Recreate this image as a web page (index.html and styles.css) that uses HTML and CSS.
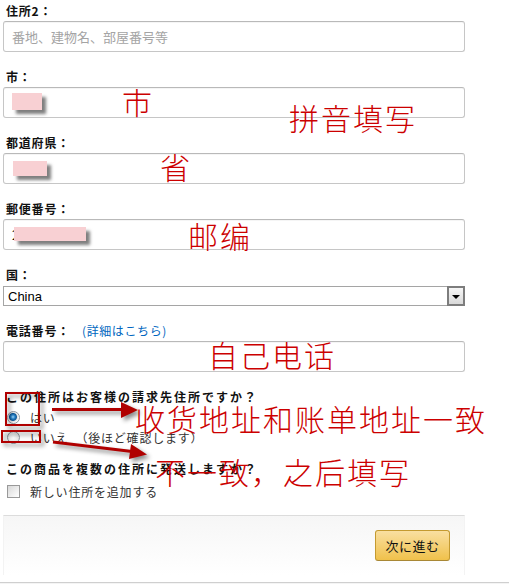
FILE: index.html
```html
<!DOCTYPE html>
<html lang="ja">
<head>
  <meta charset="UTF-8">
  <meta name="viewport" content="width=device-width, initial-scale=1.0">
  <title>お届け先住所</title>
  <link rel="stylesheet" href="styles.css">
</head>
<body>
  <div class="page">
    <form class="address-form" action="">
      <div class="field">
        <label class="field-label" for="address2">住所2：</label>
        <input class="text-input" type="text" id="address2" placeholder="番地、建物名、部屋番号等">
      </div>

      <div class="field">
        <label class="field-label" for="city">市：</label>
        <div class="input-wrap">
          <input class="text-input" type="text" id="city">
          <span class="redact redact-city"></span>
        </div>
      </div>

      <div class="field">
        <label class="field-label" for="state">都道府県：</label>
        <div class="input-wrap">
          <input class="text-input" type="text" id="state">
          <span class="redact redact-state"></span>
        </div>
      </div>

      <div class="field">
        <label class="field-label" for="zip">郵便番号：</label>
        <div class="input-wrap">
          <input class="text-input" type="text" id="zip" value="2">
          <span class="redact redact-zip"></span>
        </div>
      </div>

      <div class="field">
        <label class="field-label select-label" for="country">国：</label>
        <div class="select-wrap">
          <select class="select-input" id="country">
            <option>China</option>
          </select>
          <span class="select-arrow"></span>
        </div>
      </div>

      <div class="field">
        <label class="field-label" for="phone">電話番号：<a class="help-link" href="#">(詳細はこちら)</a></label>
        <input class="text-input" type="text" id="phone">
      </div>

      <div class="question">この住所はお客様の請求先住所ですか？</div>
      <label class="choice"><input class="radio" type="radio" name="billing" checked>はい</label>
      <label class="choice"><input class="radio" type="radio" name="billing">いいえ &nbsp;（後ほど確認します）</label>

      <div class="question question-second">この商品を複数の住所に発送しますか？</div>
      <label class="choice"><input class="checkbox" type="checkbox">新しい住所を追加する</label>

      <div class="form-footer">
        <button class="next-button" type="submit">次に進む</button>
      </div>
    </form>
    <div class="page-bottom"></div>

    <!-- hand-drawn notes on top of the screenshot -->
    <svg class="marks" width="509" height="584" viewBox="0 0 509 584">
      <g class="marks-shadow" fill="none" stroke="#b00000" stroke-width="2">
        <rect x="6" y="393" width="33" height="32"></rect>
        <rect x="2" y="431" width="38" height="11"></rect>
        <line x1="52" y1="409.5" x2="123" y2="409.5" stroke-width="3"></line>
        <polygon points="121,402 138,410 121,418" fill="#b00000" stroke="none"></polygon>
        <line x1="53" y1="442" x2="132" y2="451.5" stroke-width="3"></line>
        <polygon points="131,444 147,454.5 129,459" fill="#b00000" stroke="none"></polygon>
      </g>
    </svg>
    <div class="notes">
      <span class="note note-city">市</span>
      <span class="note note-pinyin">拼音填写</span>
      <span class="note note-state">省</span>
      <span class="note note-zip">邮编</span>
      <span class="note note-phone">自己电话</span>
      <span class="note note-same">收货地址和账单地址一致</span>
      <span class="note note-diff">不一致，之后填写</span>
    </div>
  </div>
</body>
</html>
```

FILE: styles.css
```css
body {
  margin: 0;
  padding: 0;
  background-color: #ffffff;
  font-family: "Noto Sans CJK JP", "Liberation Sans", sans-serif;
  color: #222;
}

.page {
  position: relative;
  width: 509px;
  height: 584px;
  overflow: hidden;
}

.address-form {
  width: 462px;
  padding: 3px 0 0 3px;
}

.field {
  margin-bottom: 17px;
}

.field-label {
  display: block;
  height: 16px;
  line-height: 16px;
  margin-bottom: 2px;
  padding-left: 3px;
  font-size: 12px;
  font-weight: bold;
  letter-spacing: 0.8px;
  color: #111;
}

.select-label {
  margin-bottom: 3px;
}

.help-link {
  margin-left: 12px;
  font-weight: normal;
  letter-spacing: 0.6px;
  color: #0066c0;
  text-decoration: none;
}

.input-wrap {
  position: relative;
}

.text-input {
  display: block;
  width: 100%;
  height: 31px;
  box-sizing: border-box;
  padding: 0 8px;
  border: 1px solid #c6c6c6;
  border-top-color: #b9b9b9;
  border-radius: 3px;
  box-shadow: inset 0 1px 0 rgba(0, 0, 0, 0.04);
  font-family: "Noto Sans CJK JP", sans-serif;
  font-size: 13px;
  color: #111;
  background-color: #fff;
}

.text-input::placeholder {
  color: #a4a4a4;
}

/* pink blocks that hide the private values */
.redact {
  position: absolute;
  background-color: #f8d0d3;
  box-shadow: 4px 4px 3px rgba(0, 0, 0, 0.5);
}

.redact-city {
  top: 6px;
  left: 9px;
  width: 30px;
  height: 17px;
}

.redact-state {
  top: 8px;
  left: 10px;
  width: 34px;
  height: 15px;
}

.redact-zip {
  top: 8px;
  left: 11px;
  width: 72px;
  height: 14px;
}

.select-wrap {
  position: relative;
  height: 20px;
}

.select-input {
  display: block;
  width: 100%;
  height: 20px;
  margin: 0;
  padding: 0 0 0 4px;
  border: 1px solid #a5a5a5;
  border-radius: 0;
  appearance: none;
  -webkit-appearance: none;
  background-color: #fff;
  font-family: "Liberation Sans", Arial, sans-serif;
  font-size: 13px;
  color: #000;
}

.select-arrow {
  position: absolute;
  top: 0;
  right: 0;
  width: 18px;
  height: 20px;
  box-sizing: border-box;
  border: 2px solid #7d7d7d;
  background: linear-gradient(#f6f6f6, #d9d9d9);
}

.select-arrow::after {
  content: "";
  position: absolute;
  top: 7px;
  left: 3px;
  border-left: 4px solid transparent;
  border-right: 4px solid transparent;
  border-top: 4px solid #000;
}

.question {
  height: 16px;
  line-height: 16px;
  margin-top: 15px;
  margin-bottom: 2px;
  padding-left: 3px;
  font-size: 12px;
  font-weight: bold;
  letter-spacing: 2px;
  color: #111;
}

.question-second {
  margin-top: 14px;
  margin-bottom: 4px;
}

.choice {
  display: flex;
  align-items: center;
  height: 20px;
  padding-left: 4px;
  font-size: 12px;
  letter-spacing: 0.8px;
  color: #333;
}

.radio,
.checkbox {
  appearance: none;
  -webkit-appearance: none;
  width: 13px;
  height: 13px;
  margin: 0 10px 0 0;
  box-sizing: border-box;
  flex-shrink: 0;
}

.radio {
  border: 1px solid #8d96a0;
  border-radius: 50%;
  background: radial-gradient(circle, #ffffff 0, #e4e4e4 6px);
}

.radio:checked {
  background: radial-gradient(circle at 45% 45%, #9fdcff 0, #2a82c8 2px, #0d5796 3.5px, #e2e2e2 4.5px, #ffffff 6px);
}

.checkbox {
  border: 1px solid #999;
  background: linear-gradient(135deg, #d8d8d8, #ffffff);
}

.form-footer {
  display: flex;
  justify-content: flex-end;
  height: 60px;
  box-sizing: border-box;
  margin-top: 14px;
  padding: 14px 14px 0 0;
  border-top: 1px solid #dcdcdc;
  border-left: 1px solid #f3f3f3;
  border-right: 1px solid #f3f3f3;
  background: linear-gradient(#f6f6f6, #ffffff);
}

.next-button {
  width: 75px;
  height: 31px;
  padding: 0;
  border: 1px solid #c49a30;
  border-bottom-color: #a88734;
  border-radius: 3px;
  background: linear-gradient(#f9dfa1, #f0c14b);
  font-family: "Noto Sans CJK JP", sans-serif;
  font-size: 13px;
  letter-spacing: 0.5px;
  color: #111;
  cursor: pointer;
}

.page-bottom {
  margin-top: 7px;
  height: 4px;
  border-top: 1px solid #cfcfcf;
  background-color: #f4f4f4;
}

.marks {
  position: absolute;
  top: 0;
  left: 0;
  pointer-events: none;
}

.marks-shadow {
  filter: drop-shadow(3px 3px 2px rgba(0, 0, 0, 0.45));
}

.notes {
  position: absolute;
  top: 0;
  left: 0;
  pointer-events: none;
}

.note {
  position: absolute;
  white-space: nowrap;
  font-family: "Noto Sans CJK SC", sans-serif;
  font-size: 30px;
  font-weight: 300;
  line-height: 30px;
  letter-spacing: 2px;
  color: #cc0000;
}

.note-city { top: 86px; left: 122px; }
.note-pinyin { top: 102px; left: 289px; }
.note-state { top: 151px; left: 160px; }
.note-zip { top: 220px; left: 188px; }
.note-phone { top: 339px; left: 208px; }
.note-same { top: 403px; left: 135px; }
.note-diff { top: 456px; left: 155px; }
```
